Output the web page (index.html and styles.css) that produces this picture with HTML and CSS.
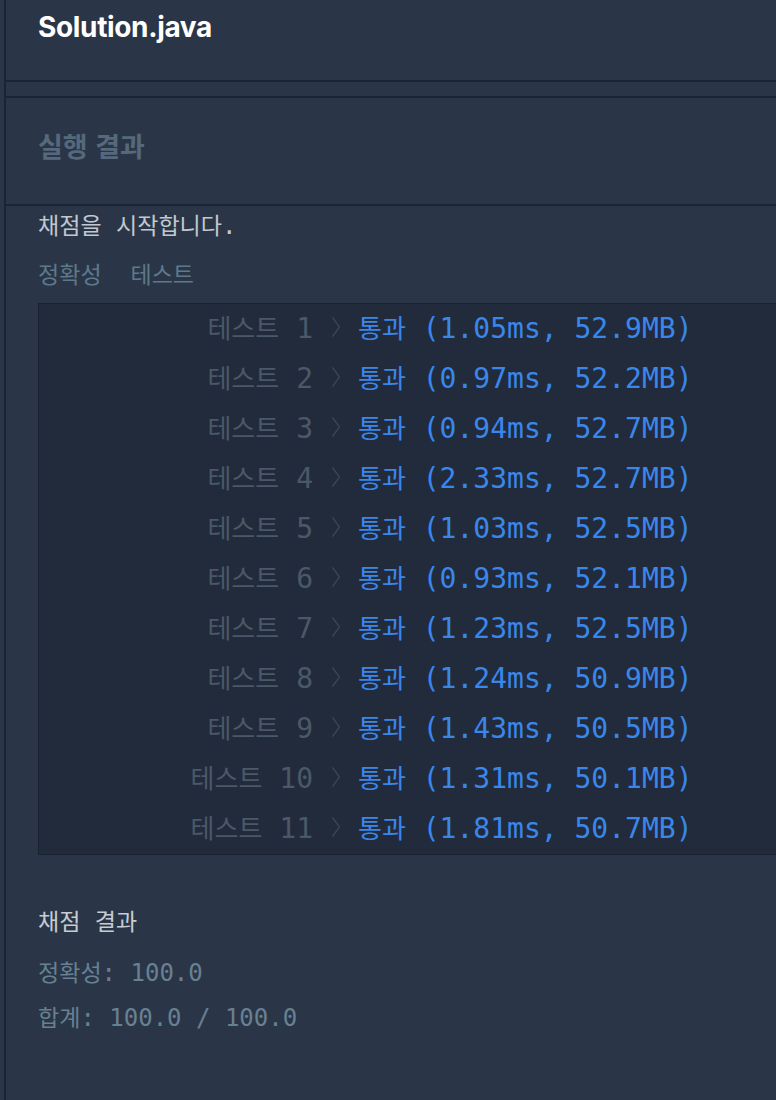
FILE: index.html
```html
<!DOCTYPE html>
<html lang="ko">
<head>
<meta charset="utf-8">
<title>Solution.java</title>
<link rel="stylesheet" href="styles.css">
</head>
<body>
<div class="panel">
  <div class="file-title">Solution.java</div>
  <div class="gutter"></div>
  <div class="result-header">실행 결과</div>
  <div class="console">
    <div class="line start"><span class="ko">채점을</span> <span class="ko">시작합니다</span>.</div>
    <div class="line group"><span class="ko">정확성</span>&nbsp;&nbsp;<span class="ko">테스트</span></div>
    <div class="test-box">
      <div class="row"><span class="label"><span class="ko">테스트</span> 1</span><span class="sep"><svg width="10" height="22" viewBox="0 0 10 22"><polyline points="1.5,1.5 8.5,11 1.5,20.5"/></svg></span><span class="res"><span class="ko">통과</span> (1.05ms, 52.9MB)</span></div>
      <div class="row"><span class="label"><span class="ko">테스트</span> 2</span><span class="sep"><svg width="10" height="22" viewBox="0 0 10 22"><polyline points="1.5,1.5 8.5,11 1.5,20.5"/></svg></span><span class="res"><span class="ko">통과</span> (0.97ms, 52.2MB)</span></div>
      <div class="row"><span class="label"><span class="ko">테스트</span> 3</span><span class="sep"><svg width="10" height="22" viewBox="0 0 10 22"><polyline points="1.5,1.5 8.5,11 1.5,20.5"/></svg></span><span class="res"><span class="ko">통과</span> (0.94ms, 52.7MB)</span></div>
      <div class="row"><span class="label"><span class="ko">테스트</span> 4</span><span class="sep"><svg width="10" height="22" viewBox="0 0 10 22"><polyline points="1.5,1.5 8.5,11 1.5,20.5"/></svg></span><span class="res"><span class="ko">통과</span> (2.33ms, 52.7MB)</span></div>
      <div class="row"><span class="label"><span class="ko">테스트</span> 5</span><span class="sep"><svg width="10" height="22" viewBox="0 0 10 22"><polyline points="1.5,1.5 8.5,11 1.5,20.5"/></svg></span><span class="res"><span class="ko">통과</span> (1.03ms, 52.5MB)</span></div>
      <div class="row"><span class="label"><span class="ko">테스트</span> 6</span><span class="sep"><svg width="10" height="22" viewBox="0 0 10 22"><polyline points="1.5,1.5 8.5,11 1.5,20.5"/></svg></span><span class="res"><span class="ko">통과</span> (0.93ms, 52.1MB)</span></div>
      <div class="row"><span class="label"><span class="ko">테스트</span> 7</span><span class="sep"><svg width="10" height="22" viewBox="0 0 10 22"><polyline points="1.5,1.5 8.5,11 1.5,20.5"/></svg></span><span class="res"><span class="ko">통과</span> (1.23ms, 52.5MB)</span></div>
      <div class="row"><span class="label"><span class="ko">테스트</span> 8</span><span class="sep"><svg width="10" height="22" viewBox="0 0 10 22"><polyline points="1.5,1.5 8.5,11 1.5,20.5"/></svg></span><span class="res"><span class="ko">통과</span> (1.24ms, 50.9MB)</span></div>
      <div class="row"><span class="label"><span class="ko">테스트</span> 9</span><span class="sep"><svg width="10" height="22" viewBox="0 0 10 22"><polyline points="1.5,1.5 8.5,11 1.5,20.5"/></svg></span><span class="res"><span class="ko">통과</span> (1.43ms, 50.5MB)</span></div>
      <div class="row"><span class="label"><span class="ko">테스트</span> 10</span><span class="sep"><svg width="10" height="22" viewBox="0 0 10 22"><polyline points="1.5,1.5 8.5,11 1.5,20.5"/></svg></span><span class="res"><span class="ko">통과</span> (1.31ms, 50.1MB)</span></div>
      <div class="row"><span class="label"><span class="ko">테스트</span> 11</span><span class="sep"><svg width="10" height="22" viewBox="0 0 10 22"><polyline points="1.5,1.5 8.5,11 1.5,20.5"/></svg></span><span class="res"><span class="ko">통과</span> (1.81ms, 50.7MB)</span></div>
    </div>
    <div class="line summary-title"><span class="ko">채점</span> <span class="ko">결과</span></div>
    <div class="line summary"><span class="ko">정확성</span>: 100.0</div>
    <div class="line summary"><span class="ko">합계</span>: 100.0 / 100.0</div>
  </div>
</div>
</body>
</html>
```

FILE: styles.css
```css
html, body {
  margin: 0;
  padding: 0;
  background: #2a3647;
  height: 100%;
  overflow: hidden;
}

.panel {
  margin-left: 4px;
  border-left: 2px solid #1c2433;
  min-height: 100%;
  overflow: hidden;
  background: #2a3647;
}

.file-title {
  box-sizing: border-box;
  height: 82px;
  padding: 10px 32px 0;
  border-bottom: 2px solid #1c2433;
  font-family: "Inter", "Liberation Sans", sans-serif;
  font-weight: 700;
  font-size: 28px;
  line-height: 34px;
  letter-spacing: -0.35px;
  color: #ffffff;
}

.gutter {
  height: 14px;
  border-bottom: 2px solid #1c2433;
}

.result-header {
  box-sizing: border-box;
  height: 108px;
  padding: 31px 32px 0;
  border-bottom: 2px solid #1c2433;
  font-family: "Noto Sans CJK KR", sans-serif;
  font-weight: 700;
  font-size: 27px;
  line-height: 34px;
  color: #56697c;
}

.console {
  padding: 0 0 40px 32px;
  font-family: "DejaVu Sans Mono", "Noto Sans CJK KR", monospace;
  font-size: 24px;
}

.ko {
  font-size: 0.93em;
}

.line .ko {
  font-size: 0.96em;
}

.line {
  line-height: 40px;
  white-space: pre;
}

.start {
  color: #c2c8cf;
}

.group {
  margin-top: 9px;
  color: #5f788b;
}

.test-box {
  margin-top: 8px;
  margin-right: -20px;
  background: #222b3b;
  border: 1px solid #1a2230;
  font-size: 28px;
}

.row {
  box-sizing: border-box;
  display: flex;
  align-items: center;
  height: 50px;
  padding-bottom: 5px;
  white-space: pre;
}

.label {
  width: 274px;
  text-align: right;
  color: #4b5868;
}

.sep {
  width: 45px;
  display: flex;
  justify-content: center;
  align-items: center;
}

.sep svg {
  display: block;
}

.sep polyline {
  fill: none;
  stroke: #394555;
  stroke-width: 1.4;
}

.res {
  color: #3a87ec;
}

.summary-title {
  margin-top: 47px;
  margin-bottom: 9px;
  color: #c6ccd2;
  line-height: 40px;
}

.summary {
  color: #688092;
  line-height: 45px;
}
```
